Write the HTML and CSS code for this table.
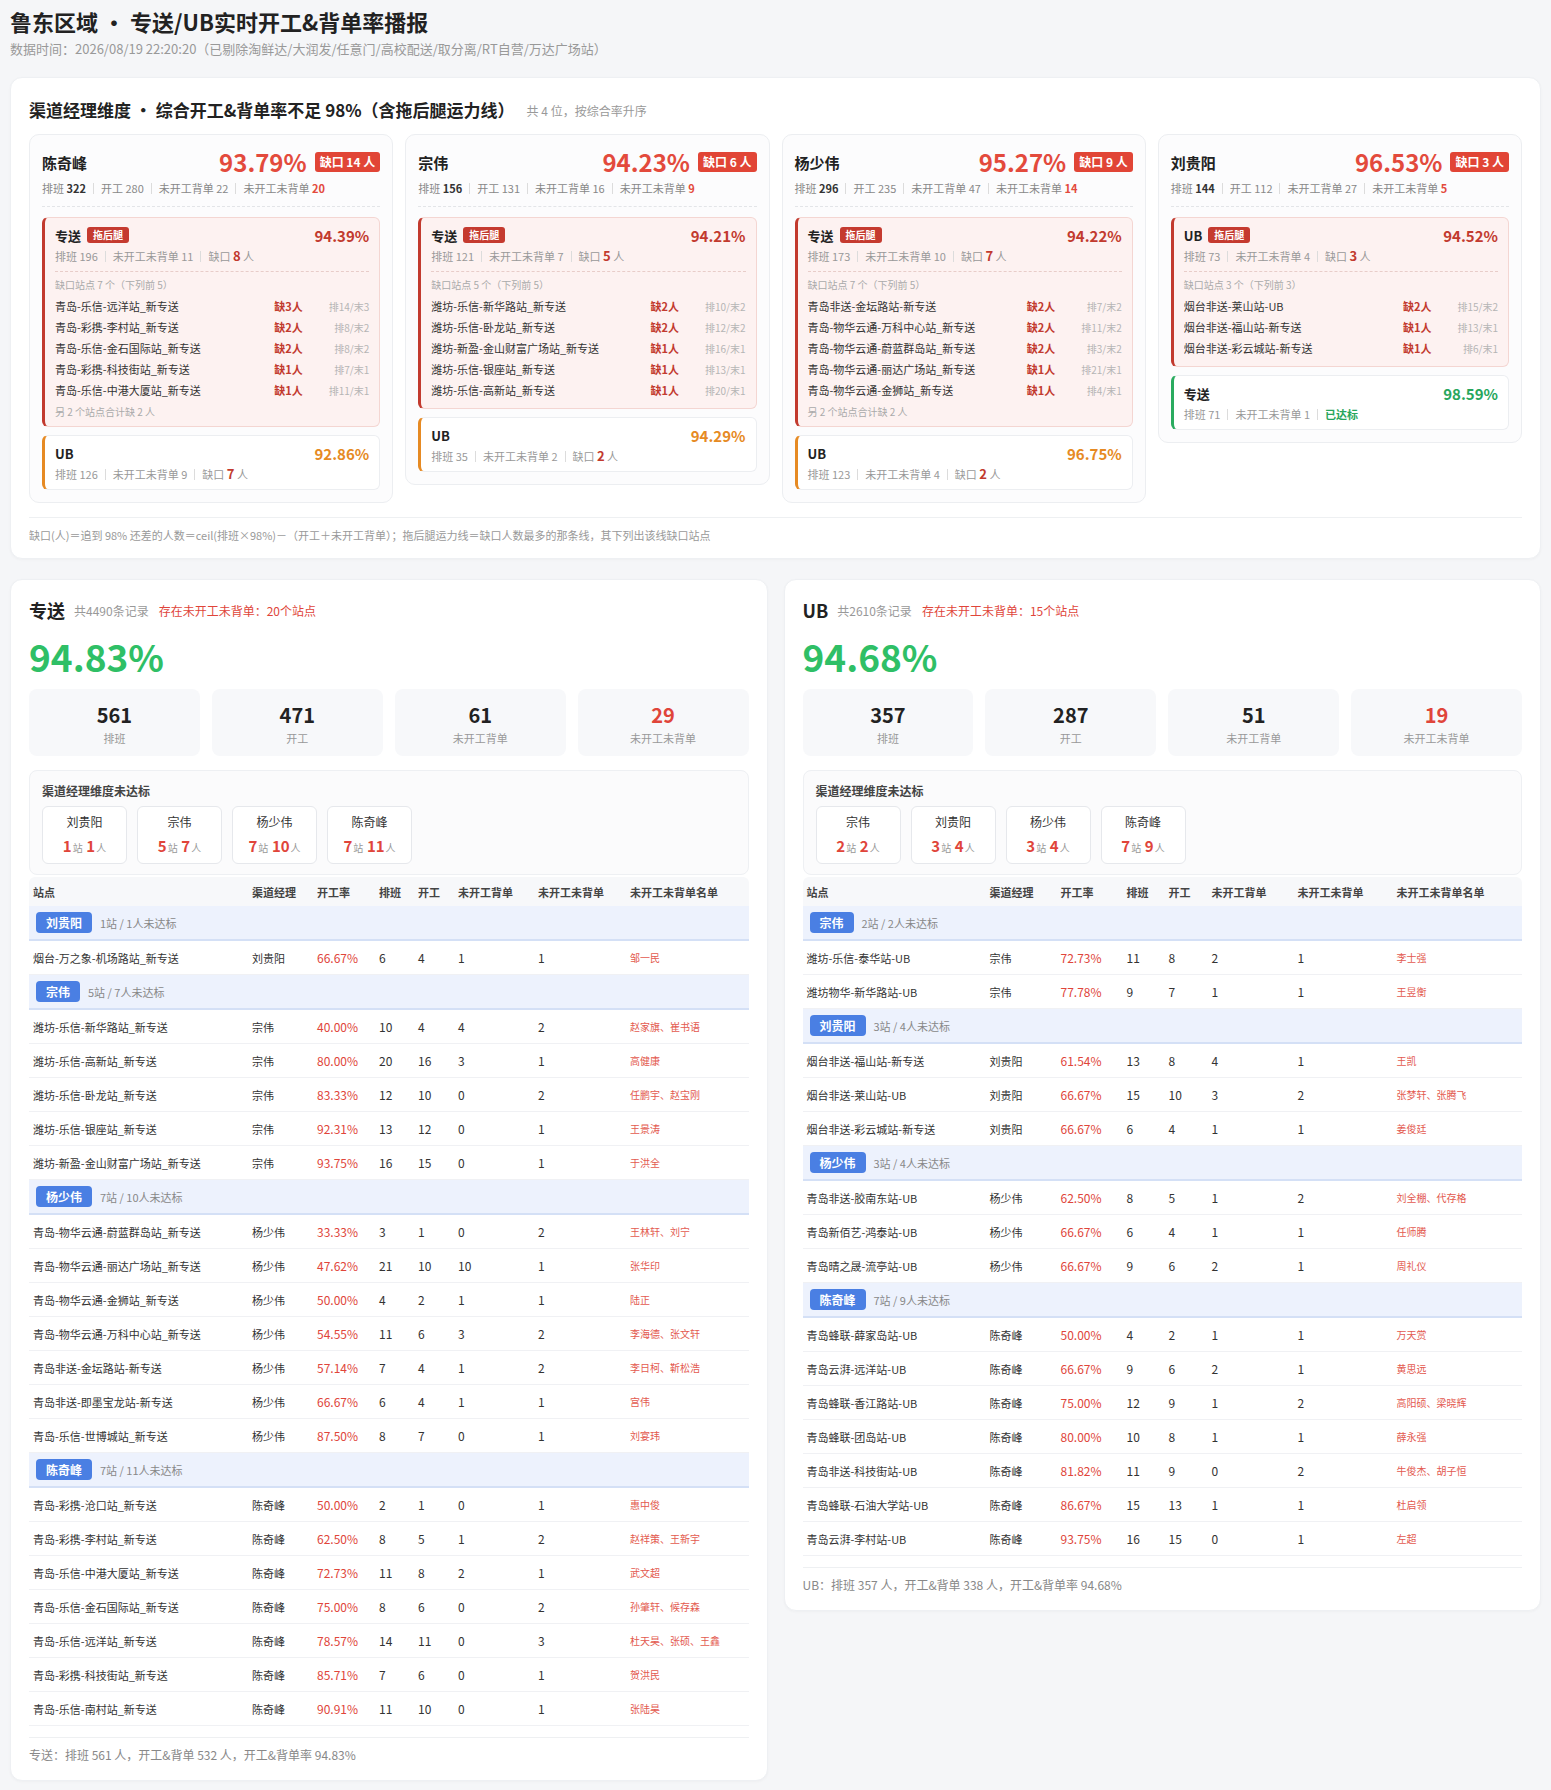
FILE: index.html
```html
<!DOCTYPE html>
<html lang="zh-CN">
<head>
<meta charset="utf-8">
<title>鲁东区域 • 专送/UB实时开工&amp;背单率播报</title>
<link rel="stylesheet" href="styles.css">
</head>
<body>
<h1 class="page-title">鲁东区域 • 专送/UB实时开工&amp;背单率播报</h1>
<div class="page-sub">数据时间：2026/08/19 22:20:20（已剔除淘鲜达/大润发/任意门/高校配送/取分离/RT自营/万达广场站）</div>

<section class="panel top-panel">
  <div class="panel-head"><span class="panel-title">渠道经理维度 • 综合开工&amp;背单率不足 98%（含拖后腿运力线）</span><span class="panel-meta">共 4 位，按综合率升序</span></div>
  <div class="cards">

    <div class="card">
      <div class="card-head"><span class="mgr-name">陈奇峰</span><span class="card-right"><span class="card-rate">93.79%</span><span class="gap-badge">缺口 14 人</span></span></div>
      <div class="card-stats">排班 <b>322</b><i class="sep"></i>开工 280<i class="sep"></i>未开工背单 22<i class="sep"></i>未开工未背单 <b class="red">20</b></div>
      <div class="line-box bad">
        <div class="lb-head"><span class="lb-name">专送</span><span class="lag">拖后腿</span><span class="lb-rate">94.39%</span></div>
        <div class="lb-stats">排班 196<i class="sep"></i>未开工未背单 11<i class="sep"></i>缺口 <b>8</b> 人</div>
        <div class="lb-list">
          <div class="lb-cap">缺口站点 7 个（下列前 5）</div>
          <div class="st-row"><span>青岛-乐信-远洋站_新专送</span><b>缺3人</b><em>排14/末3</em></div>
          <div class="st-row"><span>青岛-彩携-李村站_新专送</span><b>缺2人</b><em>排8/末2</em></div>
          <div class="st-row"><span>青岛-乐信-金石国际站_新专送</span><b>缺2人</b><em>排8/末2</em></div>
          <div class="st-row"><span>青岛-彩携-科技街站_新专送</span><b>缺1人</b><em>排7/末1</em></div>
          <div class="st-row"><span>青岛-乐信-中港大厦站_新专送</span><b>缺1人</b><em>排11/末1</em></div>
          <div class="lb-more">另 2 个站点合计缺 2 人</div>
        </div>
      </div>
      <div class="line-box warn">
        <div class="lb-head"><span class="lb-name">UB</span><span class="lb-rate">92.86%</span></div>
        <div class="lb-stats">排班 126<i class="sep"></i>未开工未背单 9<i class="sep"></i>缺口 <b>7</b> 人</div>
      </div>
    </div>

    <div class="card">
      <div class="card-head"><span class="mgr-name">宗伟</span><span class="card-right"><span class="card-rate">94.23%</span><span class="gap-badge">缺口 6 人</span></span></div>
      <div class="card-stats">排班 <b>156</b><i class="sep"></i>开工 131<i class="sep"></i>未开工背单 16<i class="sep"></i>未开工未背单 <b class="red">9</b></div>
      <div class="line-box bad">
        <div class="lb-head"><span class="lb-name">专送</span><span class="lag">拖后腿</span><span class="lb-rate">94.21%</span></div>
        <div class="lb-stats">排班 121<i class="sep"></i>未开工未背单 7<i class="sep"></i>缺口 <b>5</b> 人</div>
        <div class="lb-list">
          <div class="lb-cap">缺口站点 5 个（下列前 5）</div>
          <div class="st-row"><span>潍坊-乐信-新华路站_新专送</span><b>缺2人</b><em>排10/末2</em></div>
          <div class="st-row"><span>潍坊-乐信-卧龙站_新专送</span><b>缺2人</b><em>排12/末2</em></div>
          <div class="st-row"><span>潍坊-新盈-金山财富广场站_新专送</span><b>缺1人</b><em>排16/末1</em></div>
          <div class="st-row"><span>潍坊-乐信-银座站_新专送</span><b>缺1人</b><em>排13/末1</em></div>
          <div class="st-row"><span>潍坊-乐信-高新站_新专送</span><b>缺1人</b><em>排20/末1</em></div>
        </div>
      </div>
      <div class="line-box warn">
        <div class="lb-head"><span class="lb-name">UB</span><span class="lb-rate">94.29%</span></div>
        <div class="lb-stats">排班 35<i class="sep"></i>未开工未背单 2<i class="sep"></i>缺口 <b>2</b> 人</div>
      </div>
    </div>

    <div class="card">
      <div class="card-head"><span class="mgr-name">杨少伟</span><span class="card-right"><span class="card-rate">95.27%</span><span class="gap-badge">缺口 9 人</span></span></div>
      <div class="card-stats">排班 <b>296</b><i class="sep"></i>开工 235<i class="sep"></i>未开工背单 47<i class="sep"></i>未开工未背单 <b class="red">14</b></div>
      <div class="line-box bad">
        <div class="lb-head"><span class="lb-name">专送</span><span class="lag">拖后腿</span><span class="lb-rate">94.22%</span></div>
        <div class="lb-stats">排班 173<i class="sep"></i>未开工未背单 10<i class="sep"></i>缺口 <b>7</b> 人</div>
        <div class="lb-list">
          <div class="lb-cap">缺口站点 7 个（下列前 5）</div>
          <div class="st-row"><span>青岛非送-金坛路站-新专送</span><b>缺2人</b><em>排7/末2</em></div>
          <div class="st-row"><span>青岛-物华云通-万科中心站_新专送</span><b>缺2人</b><em>排11/末2</em></div>
          <div class="st-row"><span>青岛-物华云通-蔚蓝群岛站_新专送</span><b>缺2人</b><em>排3/末2</em></div>
          <div class="st-row"><span>青岛-物华云通-丽达广场站_新专送</span><b>缺1人</b><em>排21/末1</em></div>
          <div class="st-row"><span>青岛-物华云通-金狮站_新专送</span><b>缺1人</b><em>排4/末1</em></div>
          <div class="lb-more">另 2 个站点合计缺 2 人</div>
        </div>
      </div>
      <div class="line-box warn">
        <div class="lb-head"><span class="lb-name">UB</span><span class="lb-rate">96.75%</span></div>
        <div class="lb-stats">排班 123<i class="sep"></i>未开工未背单 4<i class="sep"></i>缺口 <b>2</b> 人</div>
      </div>
    </div>

    <div class="card">
      <div class="card-head"><span class="mgr-name">刘贵阳</span><span class="card-right"><span class="card-rate">96.53%</span><span class="gap-badge">缺口 3 人</span></span></div>
      <div class="card-stats">排班 <b>144</b><i class="sep"></i>开工 112<i class="sep"></i>未开工背单 27<i class="sep"></i>未开工未背单 <b class="red">5</b></div>
      <div class="line-box bad">
        <div class="lb-head"><span class="lb-name">UB</span><span class="lag">拖后腿</span><span class="lb-rate">94.52%</span></div>
        <div class="lb-stats">排班 73<i class="sep"></i>未开工未背单 4<i class="sep"></i>缺口 <b>3</b> 人</div>
        <div class="lb-list">
          <div class="lb-cap">缺口站点 3 个（下列前 3）</div>
          <div class="st-row"><span>烟台非送-莱山站-UB</span><b>缺2人</b><em>排15/末2</em></div>
          <div class="st-row"><span>烟台非送-福山站-新专送</span><b>缺1人</b><em>排13/末1</em></div>
          <div class="st-row"><span>烟台非送-彩云城站-新专送</span><b>缺1人</b><em>排6/末1</em></div>
        </div>
      </div>
      <div class="line-box ok">
        <div class="lb-head"><span class="lb-name">专送</span><span class="lb-rate">98.59%</span></div>
        <div class="lb-stats">排班 71<i class="sep"></i>未开工未背单 1<i class="sep"></i><b class="okt">已达标</b></div>
      </div>
    </div>

  </div>
  <div class="note">缺口(人)＝追到 98% 还差的人数＝ceil(排班×98%)－（开工＋未开工背单）；拖后腿运力线＝缺口人数最多的那条线，其下列出该线缺口站点</div>
</section>

<div class="lower">
  <section class="panel biz">
    <div class="biz-head"><span class="biz-name">专送</span><span class="biz-count">共4490条记录</span><span class="biz-warn">存在未开工未背单：20个站点</span></div>
    <div class="biz-rate">94.83%</div>
    <div class="kpis">
      <div class="kpi"><div class="kpi-num">561</div><div class="kpi-label">排班</div></div>
      <div class="kpi"><div class="kpi-num">471</div><div class="kpi-label">开工</div></div>
      <div class="kpi"><div class="kpi-num">61</div><div class="kpi-label">未开工背单</div></div>
      <div class="kpi"><div class="kpi-num red">29</div><div class="kpi-label">未开工未背单</div></div>
    </div>
    <div class="mgr-box">
      <div class="mgr-title">渠道经理维度未达标</div>
      <div class="minis">
        <div class="mini"><div class="mini-name">刘贵阳</div><div class="mini-val"><b>1</b><small>站</small> <b>1</b><small>人</small></div></div>
        <div class="mini"><div class="mini-name">宗伟</div><div class="mini-val"><b>5</b><small>站</small> <b>7</b><small>人</small></div></div>
        <div class="mini"><div class="mini-name">杨少伟</div><div class="mini-val"><b>7</b><small>站</small> <b>10</b><small>人</small></div></div>
        <div class="mini"><div class="mini-name">陈奇峰</div><div class="mini-val"><b>7</b><small>站</small> <b>11</b><small>人</small></div></div>
      </div>
    </div>
    <table class="tbl tbl-zs">
      <thead><tr><th class="c1">站点</th><th class="c2">渠道经理</th><th class="c3">开工率</th><th class="c4">排班</th><th class="c5">开工</th><th class="c6">未开工背单</th><th class="c7">未开工未背单</th><th class="c8">未开工未背单名单</th></tr></thead>
      <tbody>
        <tr class="grp"><td colspan="8"><span class="grp-badge">刘贵阳</span><span class="grp-sum">1站 / 1人未达标</span></td></tr>
        <tr><td class="st">烟台-万之象-机场路站_新专送</td><td class="mg">刘贵阳</td><td class="rt">66.67%</td><td>6</td><td>4</td><td>1</td><td>1</td><td class="nm">邹一民</td></tr>
        <tr class="grp"><td colspan="8"><span class="grp-badge">宗伟</span><span class="grp-sum">5站 / 7人未达标</span></td></tr>
        <tr><td class="st">潍坊-乐信-新华路站_新专送</td><td class="mg">宗伟</td><td class="rt">40.00%</td><td>10</td><td>4</td><td>4</td><td>2</td><td class="nm">赵家旗、崔书语</td></tr>
        <tr><td class="st">潍坊-乐信-高新站_新专送</td><td class="mg">宗伟</td><td class="rt">80.00%</td><td>20</td><td>16</td><td>3</td><td>1</td><td class="nm">高健康</td></tr>
        <tr><td class="st">潍坊-乐信-卧龙站_新专送</td><td class="mg">宗伟</td><td class="rt">83.33%</td><td>12</td><td>10</td><td>0</td><td>2</td><td class="nm">任鹏宇、赵宝刚</td></tr>
        <tr><td class="st">潍坊-乐信-银座站_新专送</td><td class="mg">宗伟</td><td class="rt">92.31%</td><td>13</td><td>12</td><td>0</td><td>1</td><td class="nm">王景涛</td></tr>
        <tr><td class="st">潍坊-新盈-金山财富广场站_新专送</td><td class="mg">宗伟</td><td class="rt">93.75%</td><td>16</td><td>15</td><td>0</td><td>1</td><td class="nm">于洪全</td></tr>
        <tr class="grp"><td colspan="8"><span class="grp-badge">杨少伟</span><span class="grp-sum">7站 / 10人未达标</span></td></tr>
        <tr><td class="st">青岛-物华云通-蔚蓝群岛站_新专送</td><td class="mg">杨少伟</td><td class="rt">33.33%</td><td>3</td><td>1</td><td>0</td><td>2</td><td class="nm">王林轩、刘宁</td></tr>
        <tr><td class="st">青岛-物华云通-丽达广场站_新专送</td><td class="mg">杨少伟</td><td class="rt">47.62%</td><td>21</td><td>10</td><td>10</td><td>1</td><td class="nm">张华印</td></tr>
        <tr><td class="st">青岛-物华云通-金狮站_新专送</td><td class="mg">杨少伟</td><td class="rt">50.00%</td><td>4</td><td>2</td><td>1</td><td>1</td><td class="nm">陆正</td></tr>
        <tr><td class="st">青岛-物华云通-万科中心站_新专送</td><td class="mg">杨少伟</td><td class="rt">54.55%</td><td>11</td><td>6</td><td>3</td><td>2</td><td class="nm">李海德、张文轩</td></tr>
        <tr><td class="st">青岛非送-金坛路站-新专送</td><td class="mg">杨少伟</td><td class="rt">57.14%</td><td>7</td><td>4</td><td>1</td><td>2</td><td class="nm">李日柯、靳松浩</td></tr>
        <tr><td class="st">青岛非送-即墨宝龙站-新专送</td><td class="mg">杨少伟</td><td class="rt">66.67%</td><td>6</td><td>4</td><td>1</td><td>1</td><td class="nm">宫伟</td></tr>
        <tr><td class="st">青岛-乐信-世博城站_新专送</td><td class="mg">杨少伟</td><td class="rt">87.50%</td><td>8</td><td>7</td><td>0</td><td>1</td><td class="nm">刘宴玮</td></tr>
        <tr class="grp"><td colspan="8"><span class="grp-badge">陈奇峰</span><span class="grp-sum">7站 / 11人未达标</span></td></tr>
        <tr><td class="st">青岛-彩携-沧口站_新专送</td><td class="mg">陈奇峰</td><td class="rt">50.00%</td><td>2</td><td>1</td><td>0</td><td>1</td><td class="nm">惠中俊</td></tr>
        <tr><td class="st">青岛-彩携-李村站_新专送</td><td class="mg">陈奇峰</td><td class="rt">62.50%</td><td>8</td><td>5</td><td>1</td><td>2</td><td class="nm">赵祥策、王新宇</td></tr>
        <tr><td class="st">青岛-乐信-中港大厦站_新专送</td><td class="mg">陈奇峰</td><td class="rt">72.73%</td><td>11</td><td>8</td><td>2</td><td>1</td><td class="nm">武文超</td></tr>
        <tr><td class="st">青岛-乐信-金石国际站_新专送</td><td class="mg">陈奇峰</td><td class="rt">75.00%</td><td>8</td><td>6</td><td>0</td><td>2</td><td class="nm">孙肇轩、候存森</td></tr>
        <tr><td class="st">青岛-乐信-远洋站_新专送</td><td class="mg">陈奇峰</td><td class="rt">78.57%</td><td>14</td><td>11</td><td>0</td><td>3</td><td class="nm">杜天昊、张硕、王鑫</td></tr>
        <tr><td class="st">青岛-彩携-科技街站_新专送</td><td class="mg">陈奇峰</td><td class="rt">85.71%</td><td>7</td><td>6</td><td>0</td><td>1</td><td class="nm">贺洪民</td></tr>
        <tr><td class="st">青岛-乐信-南村站_新专送</td><td class="mg">陈奇峰</td><td class="rt">90.91%</td><td>11</td><td>10</td><td>0</td><td>1</td><td class="nm">张陆昊</td></tr>
      </tbody>
    </table>
    <div class="biz-foot">专送：排班 561 人，开工&amp;背单 532 人，开工&amp;背单率 94.83%</div>
  </section>

  <section class="panel biz">
    <div class="biz-head"><span class="biz-name">UB</span><span class="biz-count">共2610条记录</span><span class="biz-warn">存在未开工未背单：15个站点</span></div>
    <div class="biz-rate">94.68%</div>
    <div class="kpis">
      <div class="kpi"><div class="kpi-num">357</div><div class="kpi-label">排班</div></div>
      <div class="kpi"><div class="kpi-num">287</div><div class="kpi-label">开工</div></div>
      <div class="kpi"><div class="kpi-num">51</div><div class="kpi-label">未开工背单</div></div>
      <div class="kpi"><div class="kpi-num red">19</div><div class="kpi-label">未开工未背单</div></div>
    </div>
    <div class="mgr-box">
      <div class="mgr-title">渠道经理维度未达标</div>
      <div class="minis">
        <div class="mini"><div class="mini-name">宗伟</div><div class="mini-val"><b>2</b><small>站</small> <b>2</b><small>人</small></div></div>
        <div class="mini"><div class="mini-name">刘贵阳</div><div class="mini-val"><b>3</b><small>站</small> <b>4</b><small>人</small></div></div>
        <div class="mini"><div class="mini-name">杨少伟</div><div class="mini-val"><b>3</b><small>站</small> <b>4</b><small>人</small></div></div>
        <div class="mini"><div class="mini-name">陈奇峰</div><div class="mini-val"><b>7</b><small>站</small> <b>9</b><small>人</small></div></div>
      </div>
    </div>
    <table class="tbl tbl-ub">
      <thead><tr><th class="c1">站点</th><th class="c2">渠道经理</th><th class="c3">开工率</th><th class="c4">排班</th><th class="c5">开工</th><th class="c6">未开工背单</th><th class="c7">未开工未背单</th><th class="c8">未开工未背单名单</th></tr></thead>
      <tbody>
        <tr class="grp"><td colspan="8"><span class="grp-badge">宗伟</span><span class="grp-sum">2站 / 2人未达标</span></td></tr>
        <tr><td class="st">潍坊-乐信-泰华站-UB</td><td class="mg">宗伟</td><td class="rt">72.73%</td><td>11</td><td>8</td><td>2</td><td>1</td><td class="nm">李士强</td></tr>
        <tr><td class="st">潍坊物华-新华路站-UB</td><td class="mg">宗伟</td><td class="rt">77.78%</td><td>9</td><td>7</td><td>1</td><td>1</td><td class="nm">王昱衡</td></tr>
        <tr class="grp"><td colspan="8"><span class="grp-badge">刘贵阳</span><span class="grp-sum">3站 / 4人未达标</span></td></tr>
        <tr><td class="st">烟台非送-福山站-新专送</td><td class="mg">刘贵阳</td><td class="rt">61.54%</td><td>13</td><td>8</td><td>4</td><td>1</td><td class="nm">王凯</td></tr>
        <tr><td class="st">烟台非送-莱山站-UB</td><td class="mg">刘贵阳</td><td class="rt">66.67%</td><td>15</td><td>10</td><td>3</td><td>2</td><td class="nm">张梦轩、张腾飞</td></tr>
        <tr><td class="st">烟台非送-彩云城站-新专送</td><td class="mg">刘贵阳</td><td class="rt">66.67%</td><td>6</td><td>4</td><td>1</td><td>1</td><td class="nm">姜俊廷</td></tr>
        <tr class="grp"><td colspan="8"><span class="grp-badge">杨少伟</span><span class="grp-sum">3站 / 4人未达标</span></td></tr>
        <tr><td class="st">青岛非送-胶南东站-UB</td><td class="mg">杨少伟</td><td class="rt">62.50%</td><td>8</td><td>5</td><td>1</td><td>2</td><td class="nm">刘全棚、代存格</td></tr>
        <tr><td class="st">青岛新佰艺-鸿泰站-UB</td><td class="mg">杨少伟</td><td class="rt">66.67%</td><td>6</td><td>4</td><td>1</td><td>1</td><td class="nm">任师腾</td></tr>
        <tr><td class="st">青岛晴之晟-流亭站-UB</td><td class="mg">杨少伟</td><td class="rt">66.67%</td><td>9</td><td>6</td><td>2</td><td>1</td><td class="nm">周礼仪</td></tr>
        <tr class="grp"><td colspan="8"><span class="grp-badge">陈奇峰</span><span class="grp-sum">7站 / 9人未达标</span></td></tr>
        <tr><td class="st">青岛蜂联-薛家岛站-UB</td><td class="mg">陈奇峰</td><td class="rt">50.00%</td><td>4</td><td>2</td><td>1</td><td>1</td><td class="nm">万天赏</td></tr>
        <tr><td class="st">青岛云湃-远洋站-UB</td><td class="mg">陈奇峰</td><td class="rt">66.67%</td><td>9</td><td>6</td><td>2</td><td>1</td><td class="nm">黄思远</td></tr>
        <tr><td class="st">青岛蜂联-香江路站-UB</td><td class="mg">陈奇峰</td><td class="rt">75.00%</td><td>12</td><td>9</td><td>1</td><td>2</td><td class="nm">高阳硕、梁晓辉</td></tr>
        <tr><td class="st">青岛蜂联-团岛站-UB</td><td class="mg">陈奇峰</td><td class="rt">80.00%</td><td>10</td><td>8</td><td>1</td><td>1</td><td class="nm">薛永强</td></tr>
        <tr><td class="st">青岛非送-科技街站-UB</td><td class="mg">陈奇峰</td><td class="rt">81.82%</td><td>11</td><td>9</td><td>0</td><td>2</td><td class="nm">牛俊杰、胡子恒</td></tr>
        <tr><td class="st">青岛蜂联-石油大学站-UB</td><td class="mg">陈奇峰</td><td class="rt">86.67%</td><td>15</td><td>13</td><td>1</td><td>1</td><td class="nm">杜启领</td></tr>
        <tr><td class="st">青岛云湃-李村站-UB</td><td class="mg">陈奇峰</td><td class="rt">93.75%</td><td>16</td><td>15</td><td>0</td><td>1</td><td class="nm">左超</td></tr>
      </tbody>
    </table>
    <div class="biz-foot">UB：排班 357 人，开工&amp;背单 338 人，开工&amp;背单率 94.68%</div>
  </section>
</div>
</body>
</html>
```

FILE: styles.css
```css
* { box-sizing: border-box; }
html, body { margin: 0; }
body {
  background: #f5f6f8;
  font-family: "Noto Sans CJK SC", "Noto Sans", sans-serif;
  color: #333;
  padding: 7px 10px 10px;
}
b, em, i, small { font-style: normal; }

.page-title { margin: 0; font-size: 22px; line-height: 28px; font-weight: 700; color: #222; }
.page-sub { margin-top: 4px; font-size: 13px; line-height: 20px; color: #999; }

.panel {
  background: #fff;
  border: 1px solid #eef0f3;
  border-radius: 12px;
  box-shadow: 0 1px 3px rgba(0, 0, 0, 0.03);
  padding: 19px 18px 14px;
}

/* ---------- top panel ---------- */
.top-panel { margin-top: 18px; padding-bottom: 15px; }
.panel-head { display: flex; align-items: center; height: 26px; margin-bottom: 11px; }
.panel-title { font-size: 17px; line-height: 26px; font-weight: 700; color: #222; }
.panel-meta { font-size: 12px; line-height: 26px; color: #999; margin-left: 12px; padding-top: 2px; }

.cards { display: grid; grid-template-columns: repeat(4, 1fr); gap: 12px; align-items: start; }
.card {
  background: #fcfcfd;
  border: 1px solid #eceef1;
  border-radius: 10px;
  padding: 12px 12px 12px;
}
.card-head { display: flex; align-items: center; justify-content: space-between; height: 30px; }
.mgr-name { font-size: 15px; font-weight: 700; color: #222; }
.card-right { display: flex; align-items: center; gap: 8px; }
.card-rate { font-size: 24px; line-height: 30px; font-weight: 700; color: #e34a3c; }
.gap-badge {
  background: #e14536; color: #fff; font-size: 12px; font-weight: 700;
  line-height: 20px; padding: 0 5px; border-radius: 3px;
}
.card-stats {
  margin-top: 2px;
  font-size: 11px; line-height: 18px; color: #888; white-space: nowrap;
  padding-bottom: 9px; border-bottom: 1px dashed #e3e5e8; margin-bottom: 10px;
}
.card-stats b { color: #333; font-weight: 700; }
.card-stats b.red { color: #e34a3c; }
.sep {
  display: inline-block; width: 1px; height: 11px; background: #dcdcdc;
  margin: 0 7px; vertical-align: -1px;
}

.line-box {
  background: #fff;
  border: 1px solid #eceef1;
  border-left: 3px solid #e68a23;
  border-radius: 6px;
  padding: 7px 10px 6px;
}
.line-box + .line-box { margin-top: 8px; }
.line-box.bad { background: #fdf2f1; border-color: #f4d6d2; border-left-color: #c23a2e; padding-bottom: 7px; }
.line-box.ok { border-left-color: #2aab5f; }
.lb-head { display: flex; align-items: center; height: 20px; }
.lb-name { font-size: 13px; font-weight: 700; color: #222; }
.lag {
  margin-left: 6px; background: #c53a2f; color: #fff; font-size: 10px; font-weight: 700;
  line-height: 16px; padding: 0 6px; border-radius: 3px;
}
.lb-rate { margin-left: auto; font-size: 15px; font-weight: 700; color: #e68a23; }
.bad .lb-rate { color: #c23a2e; }
.ok .lb-rate { color: #27a65c; }
.lb-stats { margin-top: 2px; font-size: 11px; line-height: 18px; color: #999; white-space: nowrap; }
.lb-stats b { color: #c23a2e; font-weight: 700; font-size: 13px; }
.lb-stats b.okt { color: #27a65c; font-size: 11px; }
.lb-list { border-top: 1px dashed #e8cdc9; margin-top: 6px; padding-top: 6px; }
.lb-cap { font-size: 10px; line-height: 14px; color: #aaa; margin-bottom: 4px; }
.st-row {
  display: grid; grid-template-columns: 1fr 39px 56px; align-items: center;
  line-height: 21px; font-size: 11px; white-space: nowrap;
}
.st-row span { color: #333; overflow: hidden; }
.st-row b { color: #c23a2e; font-weight: 700; }
.st-row em { color: #b5b5b5; font-size: 10px; text-align: right; }
.lb-more { margin-top: 4px; font-size: 10px; line-height: 14px; color: #aaa; }

.note {
  margin-top: 14px; border-top: 1px solid #eef0f2; padding-top: 9px;
  font-size: 11px; line-height: 16px; color: #999;
}

/* ---------- lower panels ---------- */
.lower { display: grid; grid-template-columns: 1fr 1fr; gap: 16px; margin-top: 20px; align-items: start; }
.biz { padding-top: 17px; padding-bottom: 16px; }
.biz-head { display: flex; align-items: center; height: 26px; }
.biz-name { font-size: 18px; line-height: 26px; font-weight: 700; color: #222; }
.biz-count { font-size: 12px; line-height: 26px; color: #999; margin-left: 9px; padding-top: 2px; }
.biz-warn { font-size: 12px; line-height: 26px; color: #e0453a; margin-left: 10px; padding-top: 2px; }
.biz-rate { margin-top: 10px; font-size: 37px; line-height: 46px; font-weight: 700; color: #2fbf66; }

.kpis { display: grid; grid-template-columns: repeat(4, 1fr); gap: 12px; margin-top: 10px; }
.kpi { background: #f7f8fa; border-radius: 8px; text-align: center; padding: 12px 0 9px; }
.kpi-num { font-size: 20px; line-height: 28px; font-weight: 700; color: #222; }
.kpi-num.red { color: #e0453a; }
.kpi-label { font-size: 11px; line-height: 17px; color: #999; margin-top: 1px; }

.mgr-box {
  margin-top: 14px; background: #fbfbfc; border: 1px solid #eef0f3; border-radius: 8px;
  padding: 11px 12px 10px;
}
.mgr-title { font-size: 12px; line-height: 18px; font-weight: 700; color: #444; }
.minis { display: flex; gap: 10px; margin-top: 6px; }
.mini {
  width: 85px; background: #fff; border: 1px solid #e6e8ec; border-radius: 6px;
  text-align: center; padding: 6px 0 4px;
}
.mini-name { font-size: 12px; line-height: 18px; color: #333; }
.mini-val { margin-top: 3px; line-height: 22px; white-space: nowrap; }
.mini-val b { font-size: 15px; font-weight: 700; color: #e0453a; }
.mini-val small { font-size: 10px; color: #999; margin-left: 1px; }

.tbl { width: 100%; margin-top: 2px; border-collapse: separate; border-spacing: 0; table-layout: fixed; }
.tbl th {
  height: 29px; background: #f7f8fa; text-align: left; font-size: 11px; font-weight: 700;
  color: #444; padding: 0 4px; white-space: nowrap;
}
.tbl th:first-child { border-top-left-radius: 6px; }
.tbl th:last-child { border-top-right-radius: 6px; }
.tbl td {
  height: 34px; border-bottom: 1px solid #f0f1f4; padding: 0 4px; font-size: 12px;
  color: #333; white-space: nowrap; vertical-align: middle;
}
.tbl td.st, .tbl td.mg { font-size: 11px; }
.tbl td.rt { color: #e0453a; }
.tbl td.nm { font-size: 10px; color: #e35a4f; }
.tbl tr.grp td {
  height: 35px; background: #edf2fd; border-bottom: 2px solid #d4e0f6; padding: 0 7px;
}
.grp-badge {
  display: inline-block; background: #4a7fe3; color: #fff; font-size: 12px; font-weight: 700;
  line-height: 21px; padding: 0 10px; border-radius: 4px; vertical-align: middle;
}
.grp-sum { font-size: 11px; color: #888; margin-left: 8px; vertical-align: middle; }

.tbl-zs .c1 { width: 219px; }
.tbl-zs .c2 { width: 65px; }
.tbl-zs .c3 { width: 62px; }
.tbl-zs .c4 { width: 39px; }
.tbl-zs .c5 { width: 40px; }
.tbl-zs .c6 { width: 80px; }
.tbl-zs .c7 { width: 92px; }
.tbl-ub .c1 { width: 183px; }
.tbl-ub .c2 { width: 71px; }
.tbl-ub .c3 { width: 66px; }
.tbl-ub .c4 { width: 42px; }
.tbl-ub .c5 { width: 43px; }
.tbl-ub .c6 { width: 86px; }
.tbl-ub .c7 { width: 99px; }

.biz-foot {
  margin-top: 11px; border-top: 1px solid #eef0f2; padding-top: 8px;
  font-size: 12px; line-height: 18px; color: #888;
}
```
